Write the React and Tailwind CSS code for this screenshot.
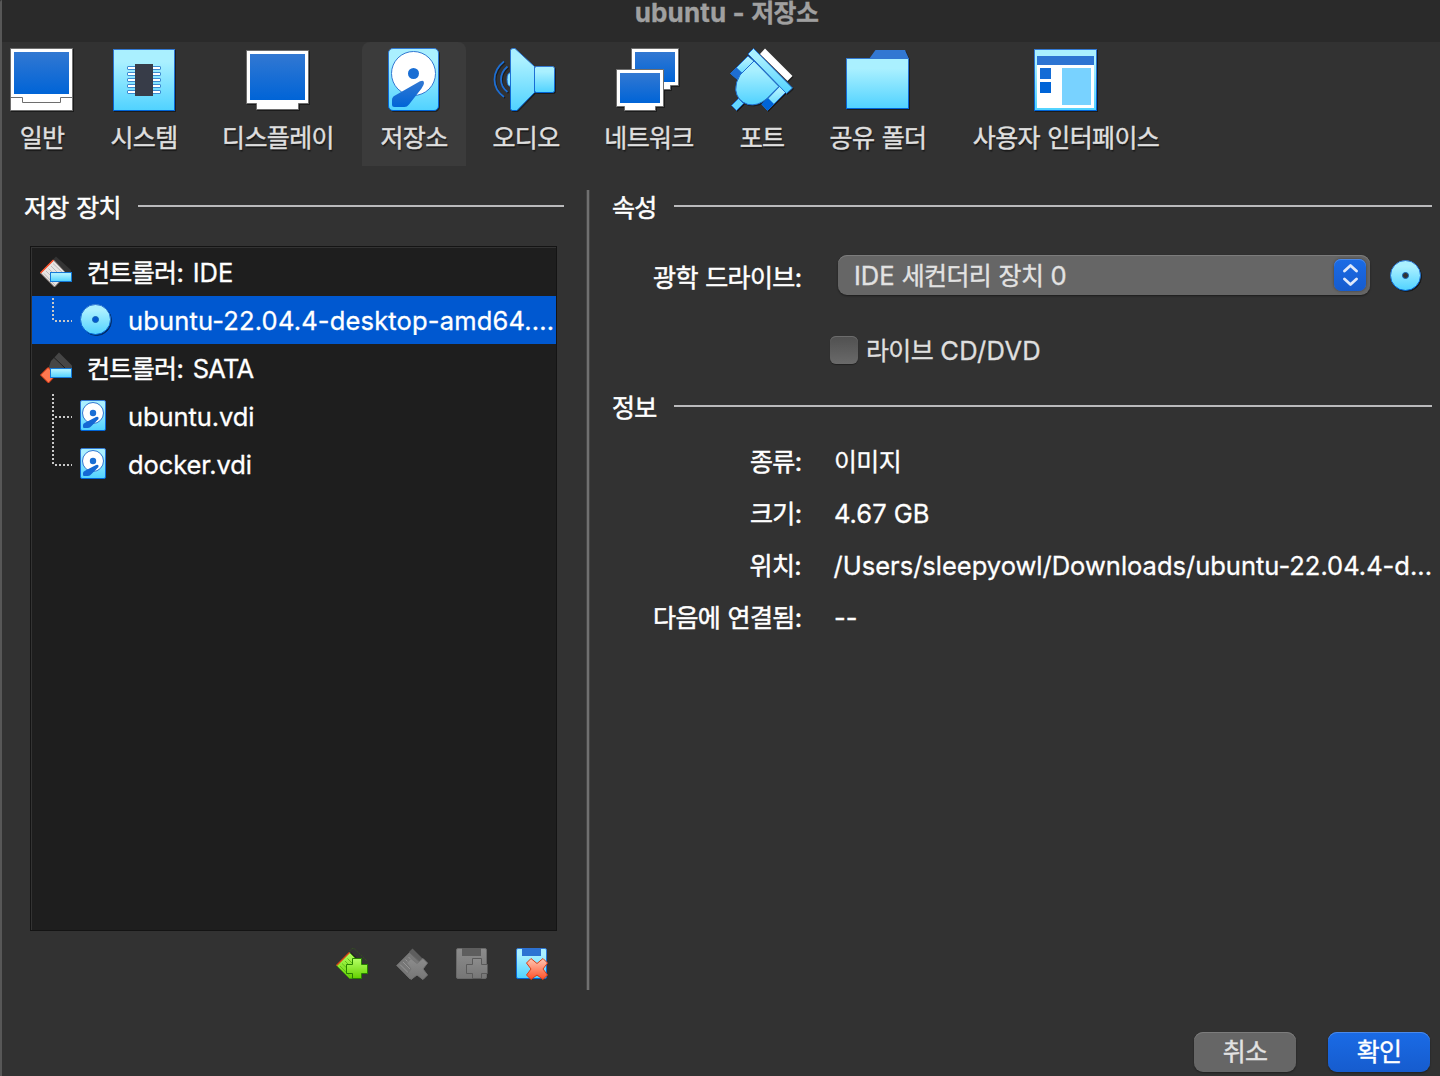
import React from "react";

const LATIN = "font-['Inter','Noto_Sans_CJK_KR',sans-serif]";
const KO = "font-['Noto_Sans_CJK_KR',sans-serif] text-[25px] tracking-[-0.65px] [word-spacing:2.5px]";

function Ko({ children, className = "" }) {
  return <span className={`${KO} ${className}`}>{children}</span>;
}

function Label({ children }) {
  return (
    <>
      <Ko className="[-webkit-text-stroke:0.5px_white]">{children}</Ko>
      <span className="[-webkit-text-stroke:0.5px_white]">:</span>
    </>
  );
}

function Gradients() {
  return (
    <svg className="absolute h-0 w-0" aria-hidden="true">
      <defs>
        <linearGradient id="sky" x1="0" y1="0" x2="0" y2="1">
          <stop offset="0.2" stopColor="#aaf0ff" />
          <stop offset="1" stopColor="#50d2ff" />
        </linearGradient>
        <linearGradient id="blue" x1="0" y1="0" x2="0" y2="1">
          <stop offset="0" stopColor="#3278d2" />
          <stop offset="1" stopColor="#0064d7" />
        </linearGradient>
        <linearGradient id="edge" x1="0" y1="0" x2="0" y2="1">
          <stop offset="0" stopColor="#3278d2" />
          <stop offset="1" stopColor="#0064d7" />
        </linearGradient>
        <linearGradient id="green" x1="0" y1="0" x2="0" y2="1">
          <stop offset="0" stopColor="#b4ff64" />
          <stop offset="1" stopColor="#64d200" />
        </linearGradient>
        <linearGradient id="red" x1="0" y1="0" x2="0" y2="1">
          <stop offset="0" stopColor="#ffc8b4" />
          <stop offset="1" stopColor="#ff5028" />
        </linearGradient>
        <linearGradient id="gray" x1="0" y1="0" x2="0" y2="1">
          <stop offset="0" stopColor="#8c8c8c" />
          <stop offset="1" stopColor="#767676" />
        </linearGradient>
      </defs>
    </svg>
  );
}

const big = "h-16 w-16 overflow-visible drop-shadow-[1px_1px_0.5px_rgba(0,0,0,0.45)]";

const GeneralIcon = () => (
  <svg className={big} viewBox="10 48 64 64">
    <rect x="10.5" y="48.5" width="62" height="62" fill="#fff" stroke="#6e6e6e" />
    <rect x="14" y="52" width="55" height="42" fill="url(#blue)" />
    <path d="M11 97.5H22.5V102.5H60.5V97.5H72" fill="none" stroke="#6e6e6e" />
  </svg>
);

const SystemIcon = () => (
  <svg className={big} viewBox="112 48 64 64">
    <rect x="113.5" y="49.5" width="61" height="61" fill="url(#sky)" stroke="url(#edge)" />
    {[66, 72, 78, 84, 90].map((y) => (
      <rect key={y} x="127.5" y={y + 0.5} width="33" height="3" rx="0.5" fill="#fff" stroke="#3c8cd2" />
    ))}
    <rect x="135" y="64" width="18" height="32" fill="#373c48" />
  </svg>
);

const DisplayIcon = () => (
  <svg className={big} viewBox="246 48 64 64">
    <path d="M246.5 50.5H308.5V103.5H298.5V109.5H256.5V103.5H246.5Z" fill="#fff" stroke="#6e6e6e" />
    <path d="M257 103.500H298" stroke="#fff" />
    <rect x="250" y="54" width="55" height="46" fill="url(#blue)" />
  </svg>
);

const StorageIcon = () => (
  <svg className={big} viewBox="382 48 64 64">
    <rect x="388.5" y="48.5" width="50" height="62" rx="4.5" fill="url(#sky)" stroke="url(#edge)" />
    <circle cx="413.5" cy="73.5" r="22" fill="#fff" stroke="#3278d2" />
    <circle cx="413.5" cy="73.5" r="5.5" fill="#196ed4" />
    <path d="M420 81.3Q424 79.500 424 83Q424 85 421.500 88.500L409 104.500Q407 107 404.500 107H394.500Q392 107 392 104.500V100Q392 97 395 95.500Z" fill="url(#blue)" />
  </svg>
);

const AudioIcon = () => (
  <svg className={big} viewBox="494 48 64 64">
    <path d="M504 61.5Q494.500 69 494.500 79.500Q494.500 90 504 97M507.500 66.500Q501 72 501 79.500Q501 87 507.500 92" fill="none" stroke="#1e6ed2" strokeWidth="1.800" />
    <path d="M510.500 72.500Q507 73 507 79.500Q507 86 510.500 86.500Z" fill="#8ce4ff" stroke="#196ed4" />
    <rect x="534.500" y="66.500" width="20" height="26" rx="2" fill="url(#sky)" stroke="url(#edge)" />
    <path d="M510.500 50.500Q510.500 48.500 513 48.500H515L534.500 66.500V92.500L517 110.500H512.500Q510.500 110.500 510.500 108.500Z" fill="url(#sky)" stroke="url(#edge)" />
  </svg>
);

const NetworkIcon = () => (
  <svg className={big} viewBox="617 48 64 64">
    <path d="M631.500 48.500H678.500V85.500H670.500V89.500H639.500V85.500H631.500Z" fill="#fff" stroke="#6e6e6e" />
    <rect x="635" y="52" width="40" height="30" fill="url(#blue)" />
    <path d="M616.500 69.500H663.500V106.500H655.500V110.500H624.500V106.500H616.500Z" fill="#fff" stroke="#6e6e6e" />
    <rect x="620" y="73" width="40" height="30" fill="url(#blue)" />
  </svg>
);

const PortIcon = () => (
  <svg className={big} viewBox="730 48 64 64">
    <path d="M760 54L765 48.500L792.500 76L787.500 81Z" fill="#fff" />
    <path d="M730.500 73.500L748 56L755 62L737.500 79.500Z" fill="url(#sky)" stroke="#1e6ed2" />
    <path d="M730.500 73.500L736.500 67.500L743.500 74L737.500 80Z" fill="#1e6ed2" />
    <path d="M762 104.500L780 86L786 92L767.500 110.500Z" fill="url(#sky)" stroke="#1e6ed2" />
    <path d="M761.500 104L768 98L774 104L767.500 110.500Z" fill="#0064d7" />
    <path d="M731.500 105.500L738.500 98.500L743.500 103.500L736.500 110.500Z" fill="#64d8ff" stroke="#1e6ed2" />
    <path d="M754 61L779 86.500L767 98.500Q758 106.500 748 104.500Q737 101 735.700 90Q735.500 82 740 75Z" fill="url(#sky)" stroke="#1e6ed2" />
    <path d="M748 54L753.500 48.500L792.500 88L786.500 93.500Z" fill="url(#sky)" stroke="#1e6ed2" />
  </svg>
);

const FolderIcon = () => (
  <svg className={big} viewBox="846 48 64 64">
    <path d="M869 59L875.500 50H905L909 59Z" fill="#3278d2" />
    <rect x="846.500" y="58.500" width="62" height="50" fill="url(#sky)" stroke="url(#edge)" />
  </svg>
);

const InterfaceIcon = () => (
  <svg className={big} viewBox="1034 48 64 64">
    <rect x="1034.500" y="49.500" width="62" height="61" fill="url(#sky)" stroke="url(#edge)" />
    <rect x="1037" y="65" width="57" height="43" fill="#fff" />
    <rect x="1037" y="56" width="57" height="9" fill="#2d74d2" />
    <rect x="1040" y="68" width="11" height="11" fill="#146cd6" />
    <rect x="1040" y="82" width="11" height="11" fill="#0064d7" />
    <rect x="1062" y="68" width="29" height="37" fill="#78d2ff" />
  </svg>
);

const tabs = [
  { label: "일반", Icon: GeneralIcon, box: "ml-[2px] w-[80px]" },
  { label: "시스템", Icon: SystemIcon, box: "ml-[10px] w-[104px]" },
  { label: "디스플레이", Icon: DisplayIcon, box: "ml-[8px] w-[148px]" },
  { label: "저장소", Icon: StorageIcon, box: "ml-[10px] w-[104px] rounded-t-lg bg-[#3b3b3b]" },
  { label: "오디오", Icon: AudioIcon, box: "ml-[8px] w-[104px]" },
  { label: "네트워크", Icon: NetworkIcon, box: "ml-[9px] w-[124px]" },
  { label: "포트", Icon: PortIcon, box: "ml-[11px] w-[80px]" },
  { label: "공유 폴더", Icon: FolderIcon, box: "ml-[9px] w-[134px]" },
  { label: "사용자 인터페이스", Icon: InterfaceIcon, box: "ml-[8px] w-[226px]" },
];

const DiscIcon = ({ hole }) => (
  <svg className="h-8 w-8 overflow-visible drop-shadow-[1px_1px_0.5px_rgba(0,0,0,0.5)]" viewBox="0 0 32 32">
    <circle cx="15.500" cy="15.500" r="15" fill="url(#sky)" stroke="url(#edge)" />
    <circle cx="15.500" cy="15.500" r="3" fill={hole} stroke="#1464b4" />
  </svg>
);

const DiskIcon = () => (
  <svg className="h-8 w-[26px] overflow-visible" viewBox="0 0 26 32">
    <rect x="0.500" y="0.500" width="25" height="30" rx="1.500" fill="url(#sky)" stroke="url(#edge)" />
    <circle cx="13" cy="13" r="10.500" fill="#fff" stroke="#3278d2" />
    <circle cx="13" cy="13" r="3.200" fill="#196ed4" />
    <path d="M16 17Q19 16 18.500 19L11.500 26Q10 28 8 28H4Q3 28 3 26.500V25Q3 23.500 5 22.800Z" fill="#1468d4" />
  </svg>
);

const IdeIcon = () => (
  <svg className="h-8 w-8 overflow-visible" viewBox="0 0 32 32">
    <path d="M13 3.500L16 0.500L31 14V17H27Z" fill="#343434" />
    <path d="M0.500 17L13.500 4L27 18L14.500 31Z" fill="#e8e4e2" stroke="#8a807c" />
    <path d="M4 17.500L15 29M6 15L17 26M8.500 12.500L19 23M11 10L22 21M13 7.500L24 18" stroke="#bbb" strokeWidth="1" />
    <path d="M0.500 17L13.500 4" stroke="#ff5028" strokeWidth="1.500" />
    <rect x="10.500" y="16.500" width="21" height="9" fill="url(#sky)" stroke="#1478d7" />
  </svg>
);

const SataIcon = () => (
  <svg className="h-8 w-8 overflow-visible" viewBox="0 0 32 32">
    <path d="M9 14.500L11 9L19 0.500L32 13.500V17H9Z" fill="#464646" />
    <path d="M14 5.500L25 16" stroke="#1e1e1e" />
    <path d="M0.500 23L8 15.500L16 23L8.500 31Z" fill="#ff7850" stroke="#e63c14" />
    <rect x="10.500" y="16.500" width="21" height="9" fill="url(#sky)" stroke="#1478d7" />
  </svg>
);

const plus = "M16.500 10.500H25.500V16.500H31.500V25.500H25.500V30.500H16.500V25.500H10.500V16.500H16.500Z";
const cross = "M10.500 15L15 10.500L21 15.500L27 10.500L31.500 15L27 21L31.500 27L27 31.500L21 27L15 31.500L10.500 27L15 21Z";
const tool = "h-8 w-8 overflow-visible";

const AddController = () => (
  <svg className={tool} viewBox="0 0 32 32">
    <path d="M13.500 3L16 0.500H18L31 13" fill="none" stroke="#34521f" strokeDasharray="2 1" />
    <path d="M15 4L28 17H15Z" fill="#242424" />
    <path d="M0.500 17.500L13.500 4.500L22 13L16 30.500H13.500Z" fill="url(#green)" stroke="#459a10" />
    <path d="M4 18L14 28M6 15.500L16 25M9 13L16 20M11.500 10.500L18 17" stroke="#62c018" />
    <path d="M0.500 17.500L13.500 4.500" stroke="#dc4614" strokeWidth="1.500" />
    <path d={plus} fill="url(#green)" stroke="#288200" />
  </svg>
);

const RemoveController = () => (
  <svg className={tool} viewBox="0 0 32 32">
    <path d="M13 4L16.500 0.500L31 15L27 19Z" fill="#5e5e5e" />
    <path d="M0.500 17.500L13.500 4.500L27 17L14 31Z" fill="#777" stroke="#666" />
    <path d="M4 16.500L14 26.500M7 14L16 23M9.500 11.500L18 20M12.500 9L22 18.500" stroke="#969696" />
    <path d={cross} fill="url(#gray)" stroke="#747474" strokeLinejoin="round" />
  </svg>
);

const AddAttachment = () => (
  <svg className={tool} viewBox="0 0 32 32">
    <rect x="0.500" y="0.500" width="30" height="30" rx="1.500" fill="url(#gray)" stroke="#696969" />
    <rect x="6" y="0" width="19" height="8" fill="#5e5e5e" />
    <path d={plus} fill="url(#gray)" stroke="#5a5a5a" />
  </svg>
);

const RemoveAttachment = () => (
  <svg className={tool} viewBox="0 0 32 32">
    <rect x="0.500" y="0.500" width="30" height="30" rx="1.500" fill="url(#sky)" stroke="url(#edge)" />
    <rect x="6" y="0" width="19" height="8" fill="#2d72d2" />
    <path d={cross} fill="url(#red)" stroke="#dc3c14" strokeLinejoin="round" />
  </svg>
);

function Section({ title, line }) {
  return (
    <div className="flex h-9 items-center justify-between">
      <div className="-mt-[3px] text-white">
        <Ko className="[-webkit-text-stroke:0.5px_white]">{title}</Ko>
      </div>
      <div className={`-mt-1 h-[2px] bg-[#bababc] ${line}`} />
    </div>
  );
}

function Branch({ last }) {
  return (
    <svg className="mt-[2px] h-12 w-[20px] overflow-visible" viewBox="0 0 20 48">
      <path d={last ? "M1 1V25" : "M1 1V49"} stroke="#c8c8c8" strokeWidth="2" strokeDasharray="2 2" />
      <path d="M3 24H20" stroke="#c8c8c8" strokeWidth="2" strokeDasharray="2 2" />
    </svg>
  );
}

function Controller({ Icon, name, nameClass = "" }) {
  return (
    <div className="flex h-12 items-center pl-2">
      <Icon />
      <div className="ml-[15px] flex items-baseline text-white">
        <div>
          <Label>컨트롤러</Label>
        </div>
        <span className={`ml-[9px] [-webkit-text-stroke:0.3px_white] ${nameClass}`}>{name}</span>
      </div>
    </div>
  );
}

function Attachment({ icon, name, selected, last }) {
  return (
    <div className={`flex h-12 items-center overflow-hidden pl-5 text-white ${selected ? "bg-[#0058d0] tracking-[0.17px]" : "tracking-[-0.1px]"}`}>
      <Branch last={last} />
      <div className="ml-2 flex w-12 items-center">{icon}</div>
      <span className="mt-[2px] whitespace-nowrap [-webkit-text-stroke:0.3px_white]">{name}</span>
    </div>
  );
}

function InfoRow({ label, children }) {
  return (
    <div className="flex h-[52px] items-center text-white">
      <div className="-mt-[3px] w-[190px] text-right">
        <Label>{label}</Label>
      </div>
      <div className="ml-8 whitespace-nowrap [-webkit-text-stroke:0.3px_white]">{children}</div>
    </div>
  );
}

export default function App() {
  return (
    <div className={`relative flex h-[1076px] w-[1440px] flex-col overflow-hidden bg-[#323232] text-[25.5px] leading-[36px] ${LATIN}`}>
      <Gradients />
      <header className="flex h-[42px] shrink-0 justify-center bg-[#2a2a2a] pl-[13px] text-[#a0a0a0]">
        <div className="-mt-[7px] text-[26px] font-bold tracking-[0.15px] [-webkit-text-stroke:0.3px_#a0a0a0]">
          ubuntu - <Ko>저장소</Ko>
        </div>
      </header>

      <nav className="flex h-[124px] shrink-0">
        {tabs.map(({ label, Icon, box }) => (
          <div key={label} className={`flex shrink-0 flex-col items-center pt-[6px] ${box}`}>
            <Icon />
            <div className="mt-[6px] whitespace-nowrap text-[#dfdfdf] [-webkit-text-stroke:0.45px_#dfdfdf] [text-shadow:1px_2px_1px_rgba(0,0,0,0.5)]">
              <Ko>{label}</Ko>
            </div>
          </div>
        ))}
      </nav>

      <main className="mt-6 flex h-[800px] shrink-0">
        <section className="w-[564px] pl-6">
          <Section title="저장 장치" line="w-[426px]" />
          <div className="ml-[6px] mt-5 h-[685px] w-[527px] border border-[#141414] bg-[#1e1e1e]">
            <div className="h-[683px] w-[525px] border-l border-t border-[#333]">
              <Controller Icon={IdeIcon} name="IDE" />
              <Attachment icon={<DiscIcon hole="#0058d0" />} name="ubuntu-22.04.4-desktop-amd64...." selected last />
              <Controller Icon={SataIcon} name="SATA" nameClass="tracking-[-0.8px]" />
              <Attachment icon={<DiskIcon />} name="ubuntu.vdi" />
              <Attachment icon={<DiskIcon />} name="docker.vdi" last />
            </div>
          </div>
          <div className="mt-[17px] flex gap-7 pl-[312px]">
            <AddController />
            <RemoveController />
            <AddAttachment />
            <RemoveAttachment />
          </div>
        </section>

        <div className="ml-[22px] w-1 border-x border-[#444] bg-[#707070]" />

        <section className="ml-[22px] w-[820px]">
          <Section title="속성" line="w-[758px]" />
          <div className="mt-7 flex h-11 items-center">
            <div className="mt-[2px] w-[190px] text-right text-white">
              <Label>광학 드라이브</Label>
            </div>
            <div className="-mt-[3px] ml-9 flex h-10 w-[532px] items-center justify-between rounded-[9px] bg-[#666] pl-4 pr-1 text-[#e2e2e2] shadow-[inset_0_1px_0_#7c7c7c,0_1px_2px_rgba(0,0,0,0.45)]">
              <span className="[-webkit-text-stroke:0.35px_#e2e2e2]">
                IDE <Ko>세컨더리 장치</Ko> 0
              </span>
              <span className="flex h-8 w-8 items-center justify-center rounded-[7px] bg-linear-to-b from-[#1a6be6] to-[#165cce] shadow-[inset_0_1px_0_#4a89ea,0_0_3px_rgba(0,0,0,0.4)]">
                <svg className="h-6 w-4" viewBox="0 0 16 24" fill="none" stroke="#dfe9fa" strokeWidth="2.800" strokeLinecap="round" strokeLinejoin="round">
                  <path d="M2.500 8L8.500 2.500L14.500 8M2.500 16L8.500 21.500L14.500 16" />
                </svg>
              </span>
            </div>
            <div className="-mt-px ml-5">
              <DiscIcon hole="#323232" />
            </div>
          </div>
          <div className="ml-[218px] mt-[34px] flex h-9 items-center">
            <div className="h-7 w-7 rounded-[6px] bg-linear-to-b from-[#505050] to-[#6a6a6a] shadow-[inset_0_1px_0_#6c6c6c,0_1px_1px_rgba(0,0,0,0.35)]" />
            <div className="ml-2 text-[#dfdfdf] [-webkit-text-stroke:0.35px_#dfdfdf]">
              <Ko>라이브</Ko> <span className="tracking-[0.35px]">CD/DVD</span>
            </div>
          </div>
          <div className="mt-[22px]">
            <Section title="정보" line="w-[758px]" />
          </div>
          <div className="mt-[10px]">
            <InfoRow label="종류">
              <div className="-mt-[3px]">
                <Ko>이미지</Ko>
              </div>
            </InfoRow>
            <InfoRow label="크기">4.67 GB</InfoRow>
            <InfoRow label="위치">/Users/sleepyowl/Downloads/ubuntu-22.04.4-d...</InfoRow>
            <InfoRow label="다음에 연결됨">--</InfoRow>
          </div>
        </section>
      </main>

      <footer className="mt-[42px] flex h-10 shrink-0 justify-end gap-8 pr-[10px]">
        <button className="flex h-10 w-[102px] items-center justify-center rounded-[9px] bg-[#666] pb-[5px] text-[#e2e2e2] shadow-[inset_0_1px_0_#7c7c7c,0_1px_2px_rgba(0,0,0,0.4)] [-webkit-text-stroke:0.4px_#e2e2e2]">
          <Ko>취소</Ko>
        </button>
        <button className="flex h-10 w-[102px] items-center justify-center rounded-[9px] bg-linear-to-b from-[#1a6be6] to-[#165cce] pb-[5px] text-white shadow-[inset_0_1px_0_#4a89ea,0_1px_2px_rgba(0,0,0,0.4)] [-webkit-text-stroke:0.4px_white]">
          <Ko>확인</Ko>
        </button>
      </footer>
      <div className="absolute inset-y-0 left-0 w-[2px] rounded-tl bg-[#575757]" />
    </div>
  );
}
